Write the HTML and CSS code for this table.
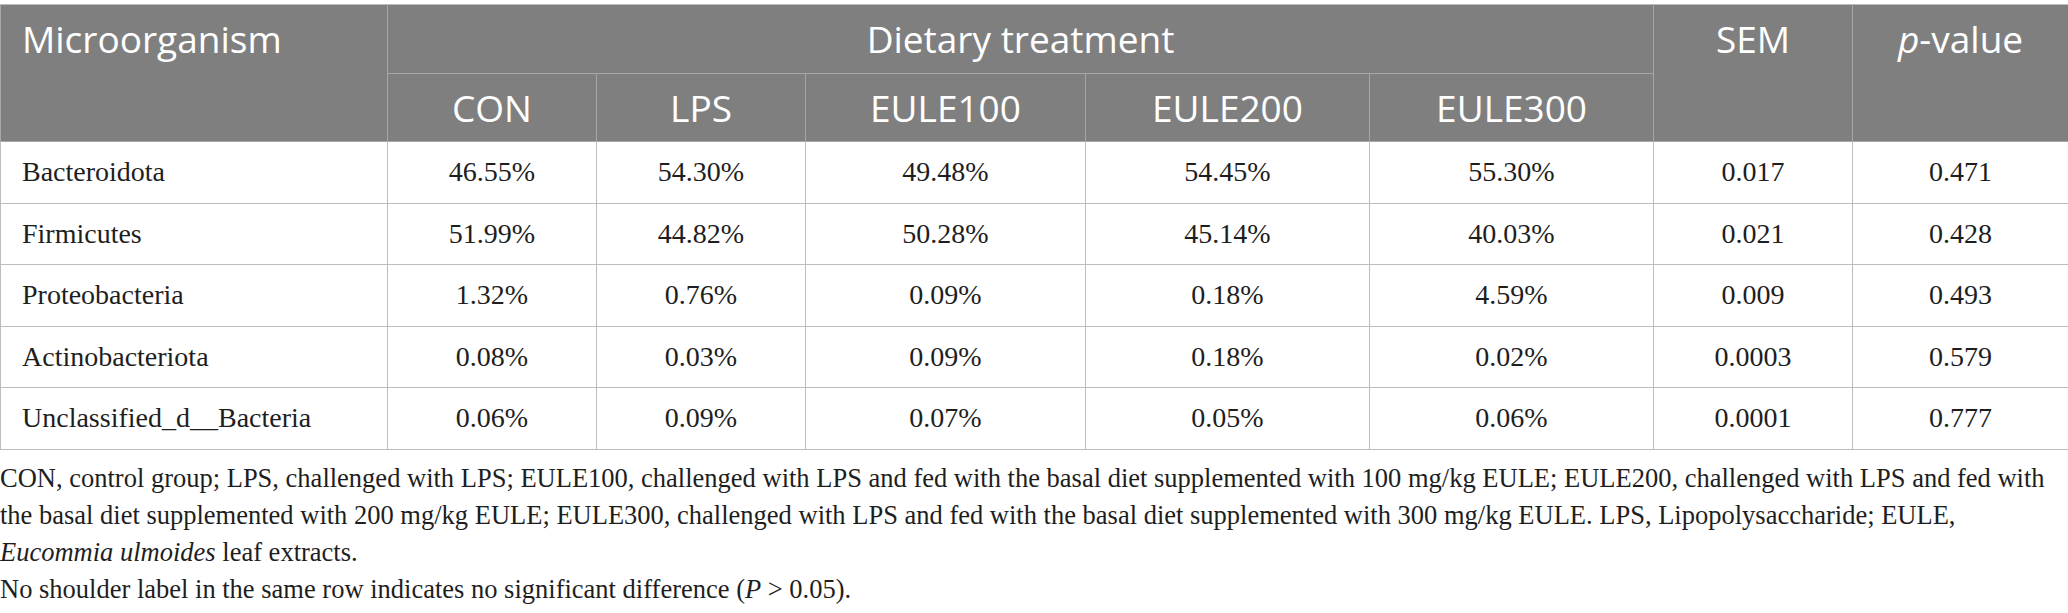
FILE: index.html
```html
<!DOCTYPE html>
<html lang="en">
<head>
<meta charset="utf-8">
<title>Microorganism table</title>
<link rel="stylesheet" href="styles.css">
</head>
<body>
<div class="page">
  <table class="data">
    <colgroup>
      <col class="c-name">
      <col class="c-con">
      <col class="c-lps">
      <col class="c-e100">
      <col class="c-e200">
      <col class="c-e300">
      <col class="c-sem">
      <col class="c-p">
    </colgroup>
    <thead>
      <tr class="h1">
        <th rowspan="2" class="left top">Microorganism</th>
        <th colspan="5">Dietary treatment</th>
        <th rowspan="2" class="top">SEM</th>
        <th rowspan="2" class="top"><i>p</i>-value</th>
      </tr>
      <tr class="h2">
        <th>CON</th>
        <th>LPS</th>
        <th>EULE100</th>
        <th>EULE200</th>
        <th>EULE300</th>
      </tr>
    </thead>
    <tbody>
      <tr>
        <td class="left">Bacteroidota</td>
        <td>46.55%</td><td>54.30%</td><td>49.48%</td><td>54.45%</td><td>55.30%</td><td>0.017</td><td>0.471</td>
      </tr>
      <tr>
        <td class="left">Firmicutes</td>
        <td>51.99%</td><td>44.82%</td><td>50.28%</td><td>45.14%</td><td>40.03%</td><td>0.021</td><td>0.428</td>
      </tr>
      <tr>
        <td class="left">Proteobacteria</td>
        <td>1.32%</td><td>0.76%</td><td>0.09%</td><td>0.18%</td><td>4.59%</td><td>0.009</td><td>0.493</td>
      </tr>
      <tr>
        <td class="left">Actinobacteriota</td>
        <td>0.08%</td><td>0.03%</td><td>0.09%</td><td>0.18%</td><td>0.02%</td><td>0.0003</td><td>0.579</td>
      </tr>
      <tr>
        <td class="left">Unclassified_d__Bacteria</td>
        <td>0.06%</td><td>0.09%</td><td>0.07%</td><td>0.05%</td><td>0.06%</td><td>0.0001</td><td>0.777</td>
      </tr>
    </tbody>
  </table>
  <div class="notes">
    <p>CON, control group; LPS, challenged with LPS; EULE100, challenged with LPS and fed with the basal diet supplemented with 100 mg/kg EULE; EULE200, challenged with LPS and fed with<br>the basal diet supplemented with 200 mg/kg EULE; EULE300, challenged with LPS and fed with the basal diet supplemented with 300 mg/kg EULE. LPS, Lipopolysaccharide; EULE,<br><i>Eucommia ulmoides</i> leaf extracts.</p>
    <p>No shoulder label in the same row indicates no significant difference (<i>P</i> &gt; 0.05).</p>
  </div>
</div>
</body>
</html>
```

FILE: styles.css
```css
html, body {
  margin: 0;
  padding: 0;
  background: #ffffff;
}

.page {
  width: 2068px;
  padding-top: 4px;
}

.data {
  width: 2068px;
  border-collapse: collapse;
  table-layout: fixed;
  border: 1px solid #bdbdbd;
}

.c-name { width: 387px; }
.c-con { width: 209px; }
.c-lps { width: 209px; }
.c-e100 { width: 280px; }
.c-e200 { width: 284px; }
.c-e300 { width: 284px; }
.c-sem { width: 199px; }
.c-p { width: 216px; }

.data th {
  background: #7f7f7f;
  color: #ffffff;
  font-family: "Open Sans", "Noto Sans", sans-serif;
  font-weight: 400;
  font-size: 37px;
  line-height: 50px;
  text-align: center;
  vertical-align: middle;
  border: 1px solid #a6a6a6;
  padding: 0 10px;
  white-space: nowrap;
}

.data thead tr:first-child th {
  border-top-color: #bdbdbd;
}

.data th.top {
  vertical-align: top;
  padding-top: 9px;
}

.data th.left,
.data td.left {
  text-align: left;
  padding-left: 21px;
}

.h1 { height: 69px; }
.h2 { height: 68px; }

.data tbody tr { height: 61.5px; }

.data td {
  font-family: "Liberation Serif", "Times New Roman", serif;
  font-size: 28px;
  color: #1e1e1e;
  text-align: center;
  vertical-align: middle;
  border: 1px solid #bdbdbd;
  padding: 0 10px;
  white-space: nowrap;
}

.notes {
  margin-top: 10px;
  font-family: "Liberation Serif", "Times New Roman", serif;
  font-size: 26.5px;
  line-height: 37.3px;
  color: #1e1e1e;
}

.notes p {
  margin: 0;
}
```
